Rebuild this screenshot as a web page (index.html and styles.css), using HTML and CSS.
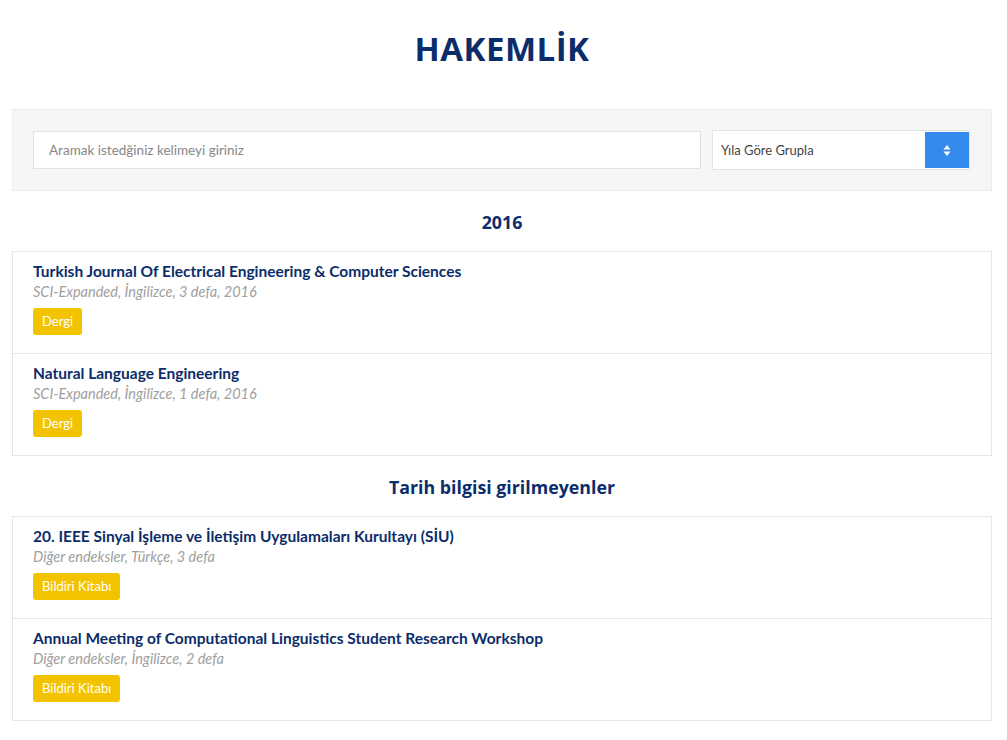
FILE: index.html
```html
<!DOCTYPE html>
<html lang="tr">
<head>
<meta charset="utf-8">
<title>Hakemlik</title>
<link rel="stylesheet" href="styles.css">
</head>
<body>
<div class="page">
  <h1 class="page-title">HAKEMLİK</h1>

  <div class="filter-panel">
    <div class="search-box">Aramak istedğiniz kelimeyi giriniz</div>
    <div class="select-box">
      <span class="select-label">Yıla Göre Grupla</span>
      <span class="select-btn">
        <svg width="8" height="11" viewBox="0 0 8 11"><path d="M4 0 L7.5 4.5 L0.5 4.5 Z M4 11 L7.5 6.5 L0.5 6.5 Z" fill="#fff"/></svg>
      </span>
    </div>
  </div>

  <h2 class="group-title">2016</h2>
  <div class="list">
    <div class="item">
      <div class="item-title">Turkish Journal Of Electrical Engineering &amp; Computer Sciences</div>
      <div class="item-sub">SCI-Expanded, İngilizce, 3 defa, 2016</div>
      <span class="badge">Dergi</span>
    </div>
    <div class="item">
      <div class="item-title">Natural Language Engineering</div>
      <div class="item-sub">SCI-Expanded, İngilizce, 1 defa, 2016</div>
      <span class="badge">Dergi</span>
    </div>
  </div>

  <h2 class="group-title">Tarih bilgisi girilmeyenler</h2>
  <div class="list">
    <div class="item">
      <div class="item-title">20. IEEE Sinyal İşleme ve İletişim Uygulamaları Kurultayı (SİU)</div>
      <div class="item-sub">Diğer endeksler, Türkçe, 3 defa</div>
      <span class="badge">Bildiri Kitabı</span>
    </div>
    <div class="item">
      <div class="item-title">Annual Meeting of Computational Linguistics Student Research Workshop</div>
      <div class="item-sub">Diğer endeksler, İngilizce, 2 defa</div>
      <span class="badge">Bildiri Kitabı</span>
    </div>
  </div>
</div>
</body>
</html>
```

FILE: styles.css
```css
* { box-sizing: border-box; }
html, body { margin: 0; padding: 0; background: #fff; }
body {
  font-family: "Lato", "Noto Sans", sans-serif;
  color: #333;
}
.page {
  width: 980px;
  margin: 0 0 0 12px;
  padding-top: 29px;
}
.page-title {
  margin: 0;
  text-align: center;
  font-family: "Open Sans", "Noto Sans", sans-serif;
  font-weight: 700;
  font-size: 33px;
  line-height: 40px;
  color: #0b2d6a;
  letter-spacing: 0.5px;
}
.filter-panel {
  margin-top: 40px;
  height: 82px;
  background: #f6f6f6;
  border: 1px solid #ececec;
  display: flex;
  align-items: center;
  padding: 0 21px 0 20px;
  gap: 11px;
}
.search-box {
  flex: 1;
  height: 38px;
  background: #fff;
  border: 1px solid #e2e2e2;
  display: flex;
  align-items: center;
  padding-left: 15px;
  font-size: 13.5px;
  color: #888;
}
.select-box {
  width: 258px;
  height: 40px;
  background: #fff;
  border: 1px solid #e4e4e4;
  display: flex;
  align-items: stretch;
}
.select-label {
  flex: 1;
  display: flex;
  align-items: center;
  padding-left: 8px;
  font-size: 13px;
  color: #444;
}
.select-btn {
  width: 44px;
  margin: 1px 0;
  background: #358bec;
  display: flex;
  align-items: center;
  justify-content: center;
}
.group-title {
  margin: 0;
  text-align: center;
  font-family: "Open Sans", "Noto Sans", sans-serif;
  font-weight: 700;
  font-size: 17.8px;
  line-height: 24px;
  color: #0b2d6a;
  padding: 19px 0 17px;
}
.list {
  border: 1px solid #e6e6e6;
}
.item {
  padding: 9px 20px 18px;
  height: 101px;
}
.item + .item { border-top: 1px solid #e6e6e6; height: 102px; }
.item-title {
  font-weight: 700;
  font-size: 15.5px;
  line-height: 20px;
  color: #0b2d6a;
}
.item-sub {
  font-style: italic;
  font-size: 14.5px;
  line-height: 21px;
  color: #a0a0a0;
  margin-bottom: 6px;
}
.badge {
  display: inline-block;
  background: #f4c300;
  color: #fff;
  font-size: 13px;
  line-height: 27px;
  padding: 0 9px;
  border-radius: 3px;
}
```
